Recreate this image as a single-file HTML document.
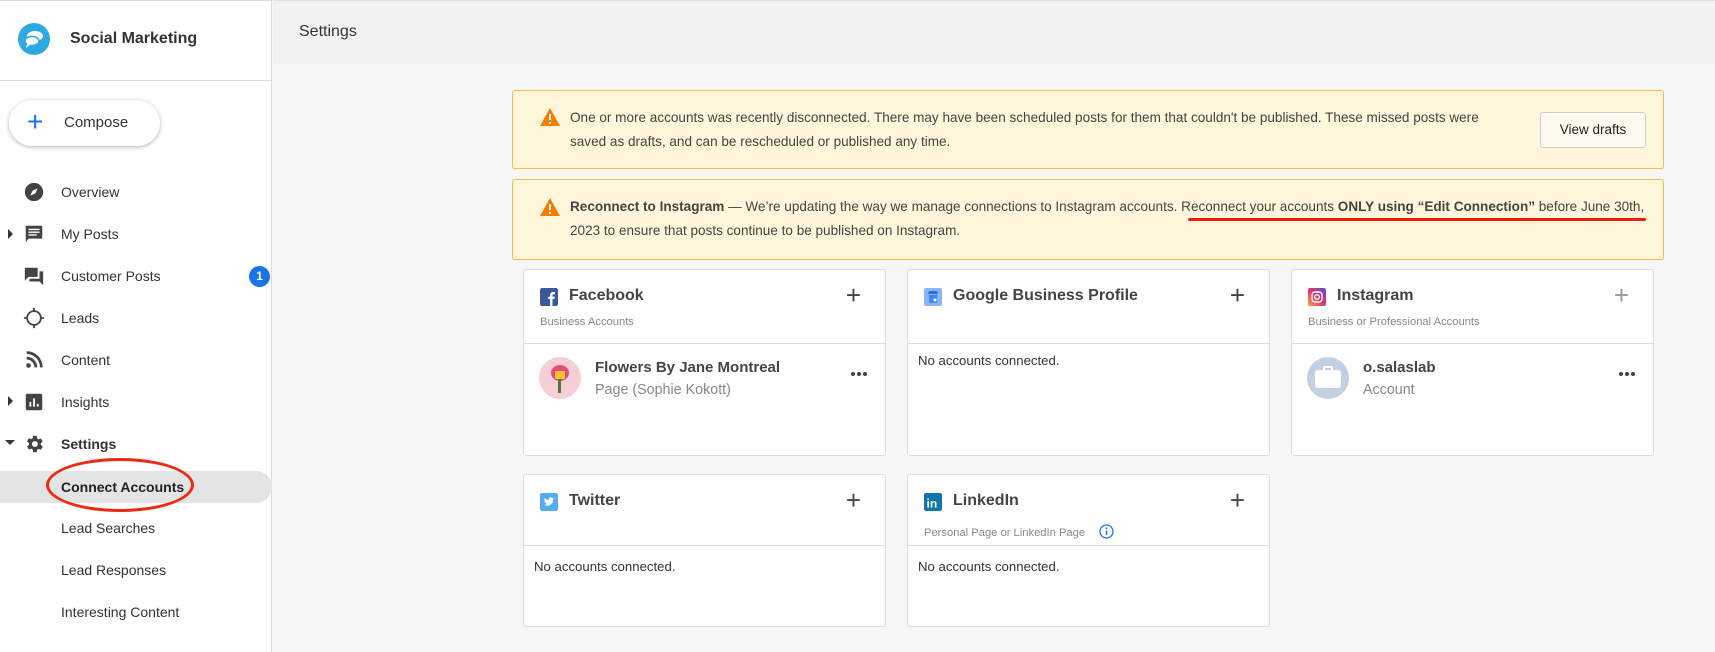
<!DOCTYPE html>
<html><head><meta charset="utf-8"><style>
*{box-sizing:border-box;margin:0;padding:0}
body{width:1715px;height:652px;overflow:hidden;font-family:"Liberation Sans",Arial,sans-serif;background:#f7f7f7;position:relative;color:#333}
.abs{position:absolute}
#side{left:0;top:0;width:272px;height:652px;background:#fff;border-right:1px solid #ddd;border-top:1px solid #ddd}
#hdr{left:273px;top:0;width:1442px;height:64px;background:#f2f2f2;border-top:1px solid #ddd}
.nav{position:absolute;left:61px;font-size:14px;color:#333;line-height:20px}
.ic{position:absolute;left:23px;width:22px;height:22px}
.alert{position:absolute;left:512px;width:1152px;background:#fff6dc;border:1px solid #f5c13c;border-radius:3px;font-size:13.55px;line-height:24px;color:#444}
.warn{position:absolute;left:27px;width:20px;height:18px}
.card{position:absolute;width:363px;background:#fff;border:1px solid #ddd;border-radius:3px}
.ct{position:absolute;left:45px;top:17px;font-size:16px;font-weight:bold;color:#444}
.cs{position:absolute;left:16px;font-size:11.2px;color:#888}
.plus{position:absolute;right:24px;top:12px;font-size:26px;font-weight:300;color:#444;line-height:26px}
.div{position:absolute;left:0;right:0;height:1px;background:#ddd}
.none{position:absolute;left:10px;font-size:13.2px;color:#333}
.logo{position:absolute;left:16px;top:18px;width:18px;height:18px;border-radius:2px}
.dots{position:absolute;left:327px;top:102px;width:16px;height:4px}
.dots i{position:absolute;top:0;width:4px;height:4px;border-radius:50%;background:#444}
</style></head><body>
<div id="side" class="abs"></div>
<div class="abs" style="left:0;top:80px;width:272px;height:1px;background:#ddd"></div>
<svg class="abs" style="left:17px;top:22px" width="34" height="34" viewBox="0 0 34 34"><circle cx="17" cy="17" r="16" fill="#2ea8e0"/><ellipse cx="18" cy="14" rx="8" ry="5" fill="#fff"/><ellipse cx="15" cy="19" rx="7" ry="4.5" fill="#fff" stroke="#2ea8e0" stroke-width="1.5"/><path d="M10 22 L9 26 L14 22Z" fill="#fff"/></svg>
<div class="abs" style="left:70px;top:30px;font-size:16px;font-weight:bold;color:#333">Social Marketing</div>
<div class="abs" style="left:9px;top:100px;width:151px;height:46px;border-radius:23px;background:#fff;box-shadow:0 1px 4px rgba(0,0,0,.3)"></div>
<div class="abs" style="left:27px;top:106px;font-size:28px;color:#1a73e8;font-weight:300;line-height:32px">+</div>
<div class="abs" style="left:64px;top:114px;font-size:15px;color:#333">Compose</div>

<svg class="ic" style="top:181px" viewBox="0 0 24 24"><circle cx="12" cy="12" r="10" fill="#444"/><path d="M16 8 L13.5 13.5 L8 16 L10.5 10.5Z" fill="#fff"/></svg>
<div class="nav" style="top:182px">Overview</div>
<div class="abs" style="left:8px;top:229px;border-left:5px solid #333;border-top:5px solid transparent;border-bottom:5px solid transparent"></div>
<svg class="ic" style="top:223px" viewBox="0 0 24 24"><path d="M3 3h18v14H6l-3 4z" fill="#444"/><path d="M6 7h12M6 10h12M6 13h9" stroke="#fff" stroke-width="1.5"/></svg>
<div class="nav" style="top:224px">My Posts</div>
<svg class="ic" style="top:265px" viewBox="0 0 24 24"><path d="M2 3h14v10H6l-4 4z" fill="#444"/><path d="M18 7h4v15l-4-4H7v-3h11z" fill="#444"/></svg>
<div class="nav" style="top:266px">Customer Posts</div>
<div class="abs" style="left:249px;top:266px;width:21px;height:21px;border-radius:50%;background:#1a73e8;color:#fff;font-size:12px;font-weight:bold;text-align:center;line-height:21px">1</div>
<svg class="ic" style="top:307px" viewBox="0 0 24 24"><circle cx="12" cy="12" r="7.5" fill="none" stroke="#444" stroke-width="2"/><path d="M12 1v4M12 19v4M1 12h4M19 12h4" stroke="#444" stroke-width="2"/></svg>
<div class="nav" style="top:308px">Leads</div>
<svg class="ic" style="top:349px" viewBox="0 0 24 24"><circle cx="6" cy="18" r="2.5" fill="#444"/><path d="M4 10a10 10 0 0 1 10 10M4 4a16 16 0 0 1 16 16" fill="none" stroke="#444" stroke-width="3"/></svg>
<div class="nav" style="top:350px">Content</div>
<div class="abs" style="left:8px;top:396px;border-left:5px solid #333;border-top:5px solid transparent;border-bottom:5px solid transparent"></div>
<svg class="ic" style="top:391px" viewBox="0 0 24 24"><rect x="3" y="3" width="18" height="18" rx="2" fill="#444"/><path d="M8 17v-5M12 17V8M16 17v-3" stroke="#fff" stroke-width="2"/></svg>
<div class="nav" style="top:392px">Insights</div>
<div class="abs" style="left:5px;top:440px;border-top:5px solid #333;border-left:5px solid transparent;border-right:5px solid transparent"></div>
<svg class="ic" style="top:433px" viewBox="0 0 24 24"><path d="M19.4 13a7.5 7.5 0 0 0 0-2l2.1-1.6-2-3.5-2.5 1a7 7 0 0 0-1.700-1L15 3h-4l-.4 2.7a7 7 0 0 0-1.7 1l-2.5-1-2 3.5L6.6 11a7.5 7.5 0 0 0 0 2l-2.1 1.6 2 3.5 2.5-1a7 7 0 0 0 1.7 1L11 21h4l.4-2.7a7 7 0 0 0 1.7-1l2.5 1 2-3.5z" fill="#444"/><circle cx="13" cy="12" r="3.2" fill="#fff"/></svg>
<div class="nav" style="top:434px;font-weight:bold">Settings</div>
<div class="abs" style="left:0;top:471px;width:272px;height:32px;background:#e4e4e4;border-radius:0 16px 16px 0"></div>
<div class="nav" style="top:477px;font-weight:bold;color:#222">Connect Accounts</div>
<div class="abs" style="left:46px;top:458px;width:148px;height:54px;border:3px solid #ee2a12;border-radius:50%"></div>
<div class="nav" style="top:518px">Lead Searches</div>
<div class="nav" style="top:560px">Lead Responses</div>
<div class="nav" style="top:602px">Interesting Content</div>

<div id="hdr" class="abs"></div>
<div class="abs" style="left:299px;top:23px;font-size:16px;color:#333">Settings</div>

<div class="alert" style="top:90px;height:79px">
<svg class="warn" style="top:17px" viewBox="0 0 20 18"><path d="M10 0L20 18H0z" fill="#f57c00"/><path d="M10 6v6M10 14v2" stroke="#fff" stroke-width="2"/></svg>
<div class="abs" style="left:57px;top:15px;width:945px">One or more accounts was recently disconnected. There may have been scheduled posts for them that couldn't be published. These missed posts were saved as drafts, and can be rescheduled or published any time.</div>
<div class="abs" style="left:1027px;top:21px;width:106px;height:36px;border:1px solid #ccc;border-radius:3px;background:#fffaf0;font-size:13.5px;color:#222;text-align:center;line-height:34px">View drafts</div>
</div>
<div class="alert" style="top:179px;height:81px">
<svg class="warn" style="top:18px" viewBox="0 0 20 18"><path d="M10 0L20 18H0z" fill="#f57c00"/><path d="M10 6v6M10 14v2" stroke="#fff" stroke-width="2"/></svg>
<div class="abs" style="left:57px;top:15px;width:1090px;white-space:nowrap"><b>Reconnect to Instagram</b> — We’re updating the way we manage connections to Instagram accounts. Reconnect your accounts <b>ONLY using “Edit Connection”</b> before June 30th,<br>2023 to ensure that posts continue to be published on Instagram.</div>
<div class="abs" style="left:675px;top:38px;width:458px;height:3px;background:#f21c0a;border-radius:2px"></div>
</div>

<!-- Facebook -->
<div class="card" style="left:523px;top:269px;height:187px">
<svg class="logo" viewBox="0 0 18 18"><rect width="18" height="18" rx="2" fill="#3b5998"/><path d="M12.5 18v-7h2l.3-2.4h-2.3V7.3c0-.7.2-1.1 1.2-1.1h1.2V4.1a16 16 0 0 0-1.8-.1c-1.8 0-3 1.1-3 3.1v1.6h-2V11h2v7z" fill="#fff"/></svg>
<div class="ct">Facebook</div><div class="plus">+</div>
<div class="cs" style="top:46px">Business Accounts</div>
<div class="div" style="top:73px"></div>
<div class="abs" style="left:15px;top:87px;width:42px;height:42px;border-radius:50%;background:#f6cfd6;overflow:hidden"><div style="position:absolute;left:12px;top:8px;width:18px;height:16px;border-radius:50%;background:#e84a7a"></div><div style="position:absolute;left:16px;top:14px;width:10px;height:8px;background:#f1c232"></div><div style="position:absolute;left:19px;top:22px;width:3px;height:14px;background:#4a7a3a"></div></div>
<div class="abs" style="left:71px;top:89px;font-size:15px;font-weight:bold;color:#444">Flowers By Jane Montreal</div>
<div class="abs" style="left:71px;top:112px;font-size:14.3px;color:#888">Page (Sophie Kokott)</div>
<div class="dots"><i style="left:0"></i><i style="left:6px"></i><i style="left:12px"></i></div>
</div>
<!-- Google -->
<div class="card" style="left:907px;top:269px;height:187px">
<svg class="logo" viewBox="0 0 18 18"><rect width="18" height="18" rx="2" fill="#8ab4f8"/><path d="M4 6h10l-1-3H5z" fill="#1a73e8"/><rect x="5" y="7" width="8" height="8" fill="#4285f4"/><circle cx="11" cy="12" r="1.5" fill="#fff"/></svg>
<div class="ct">Google Business Profile</div><div class="plus">+</div>
<div class="div" style="top:73px"></div>
<div class="none" style="top:83px">No accounts connected.</div>
</div>
<!-- Instagram -->
<div class="card" style="left:1291px;top:269px;height:187px">
<svg class="logo" viewBox="0 0 18 18"><defs><linearGradient id="ig" x1="0" y1="1" x2="1" y2="0"><stop offset="0" stop-color="#f9a23a"/><stop offset=".5" stop-color="#e1306c"/><stop offset="1" stop-color="#5b51d8"/></linearGradient></defs><rect width="18" height="18" rx="2" fill="url(#ig)"/><rect x="4" y="4" width="10" height="10" rx="3" fill="none" stroke="#fff" stroke-width="1.4"/><circle cx="9" cy="9" r="2.3" fill="none" stroke="#fff" stroke-width="1.4"/></svg>
<div class="ct">Instagram</div><div class="plus" style="color:#999">+</div>
<div class="cs" style="top:46px">Business or Professional Accounts</div>
<div class="div" style="top:73px"></div>
<div class="abs" style="left:15px;top:87px;width:42px;height:42px;border-radius:50%;background:#c5cfe3"><div style="position:absolute;left:8px;top:13px;width:26px;height:18px;background:#fff;border-radius:3px"></div><div style="position:absolute;left:16px;top:9px;width:10px;height:6px;border:2px solid #fff;border-bottom:none"></div></div>
<div class="abs" style="left:71px;top:89px;font-size:15px;font-weight:bold;color:#444">o.salaslab</div>
<div class="abs" style="left:71px;top:112px;font-size:14.3px;color:#888">Account</div>
<div class="dots"><i style="left:0"></i><i style="left:6px"></i><i style="left:12px"></i></div>
</div>
<!-- Twitter -->
<div class="card" style="left:523px;top:474px;height:153px">
<svg class="logo" viewBox="0 0 18 18"><rect width="18" height="18" rx="2" fill="#55acee"/><path d="M14 5.5a4 4 0 0 1-1.2.3 2 2 0 0 0 .9-1.1 4 4 0 0 1-1.3.5 2 2 0 0 0-3.5 1.9 5.8 5.8 0 0 1-4.2-2.1 2 2 0 0 0 .6 2.7 2 2 0 0 1-.9-.2 2 2 0 0 0 1.6 2 2 2 0 0 1-.9 0 2 2 0 0 0 1.9 1.4A4 4 0 0 1 4 11.8a5.8 5.8 0 0 0 9-5.2 4 4 0 0 0 1-1.1z" fill="#fff"/></svg>
<div class="ct">Twitter</div><div class="plus">+</div>
<div class="div" style="top:70px"></div>
<div class="none" style="top:84px">No accounts connected.</div>
</div>
<!-- LinkedIn -->
<div class="card" style="left:907px;top:474px;height:153px">
<svg class="logo" viewBox="0 0 18 18"><rect width="18" height="18" rx="2" fill="#0e76a8"/><text x="2.5" y="14.5" font-family="Liberation Sans,sans-serif" font-weight="bold" font-size="12" fill="#fff">in</text></svg>
<div class="ct">LinkedIn</div><div class="plus">+</div>
<div class="cs" style="top:52px">Personal Page or LinkedIn Page</div>
<svg class="abs" style="left:191px;top:49px" width="15" height="15" viewBox="0 0 15 15"><circle cx="7.5" cy="7.5" r="6.5" fill="none" stroke="#1a73e8" stroke-width="1.3"/><path d="M7.5 6.5v4.5" stroke="#1a73e8" stroke-width="1.5"/><circle cx="7.5" cy="4.3" r=".9" fill="#1a73e8"/></svg>
<div class="div" style="top:70px"></div>
<div class="none" style="top:84px">No accounts connected.</div>
</div>
</body></html>
